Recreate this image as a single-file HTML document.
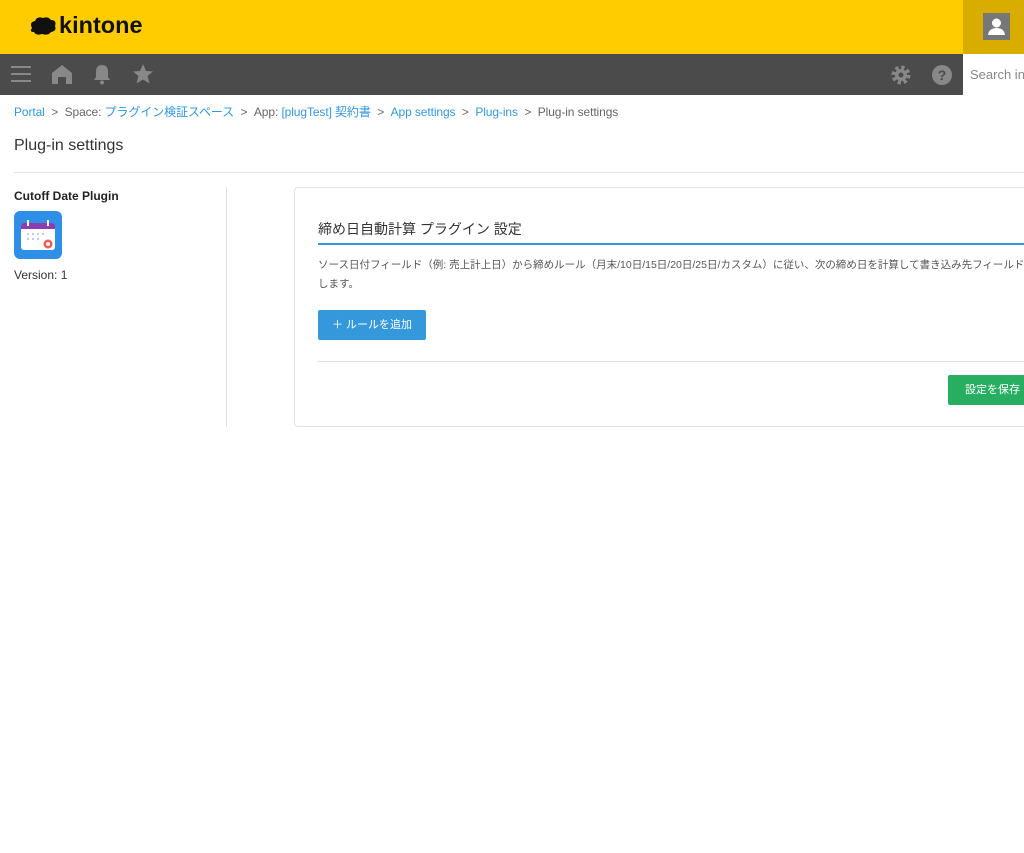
<!DOCTYPE html><html><head><meta charset="utf-8"><style>
body{margin:0;width:1024px;height:853px;overflow:hidden;background:#fff;font-family:"Liberation Sans","Noto Sans CJK JP",sans-serif;position:relative;color:#333}
.a{position:absolute}
.bc{font-size:12px;color:#666;white-space:nowrap;letter-spacing:-0.1px}
.bc a{color:#3498db;text-decoration:none}
</style></head><body>
<div class="a" style="left:0;top:0;width:1024px;height:54px;background:#fc0"></div>
<div class="a" style="left:963px;top:0;width:61px;height:54px;background:#d9ac00"></div>
<div class="a" style="left:983px;top:13px;width:27px;height:27px;background:#777"></div>
<svg class="a" style="left:983px;top:13px" width="27" height="27"><circle cx="13.5" cy="10" r="4.5" fill="#fff"/><path d="M5 22 Q6 15 13.5 15 Q21 15 22 22Z" fill="#fff"/></svg>
<svg class="a" style="left:29px;top:16px" width="30" height="22"><path d="M3 12 Q0 6 6 5 Q8 0 14 2 Q19 0 22 4 Q28 4 26 10 Q28 15 22 16 Q19 20 13 18 Q7 20 5 16 Q0 16 3 12Z" fill="#111"/></svg>
<div class="a" style="left:59px;top:12px;font-size:23.5px;font-weight:bold;color:#111">kintone</div>
<div class="a" style="left:0;top:54px;width:963px;height:41px;background:#4b4b4b"></div>
<div class="a" style="left:963px;top:54px;width:61px;height:41px;background:#fff"></div>
<div class="a" style="left:970px;top:67px;font-size:13px;color:#888;white-space:nowrap">Search in</div>
<svg class="a" style="left:10px;top:64px" width="22" height="20"><path d="M1 3H21M1 10H21M1 17H21" stroke="#888" stroke-width="2"/></svg>
<svg class="a" style="left:51px;top:64px" width="22" height="20"><path d="M11 1 L21 9 V20 H15 V13 H7 V20 H1 V9Z" fill="#888"/></svg>
<svg class="a" style="left:92px;top:63px" width="20" height="22"><path d="M10 2 Q4 2 4 9 V14 L2 17 H18 L16 14 V9 Q16 2 10 2Z" fill="#888"/><circle cx="10" cy="19.5" r="2" fill="#888"/></svg>
<svg class="a" style="left:132px;top:63px" width="22" height="22"><path d="M11 1 L14 8 L21 8.5 L15.5 13 L17.5 20.5 L11 16.5 L4.5 20.5 L6.5 13 L1 8.5 L8 8Z" fill="#888"/></svg>
<svg class="a" style="left:890px;top:64px" width="22" height="22"><circle cx="11" cy="11" r="7" fill="none" stroke="#888" stroke-width="5" stroke-dasharray="3 2.5"/><circle cx="11" cy="11" r="6" fill="#888"/><circle cx="11" cy="11" r="2.5" fill="#4b4b4b"/></svg>
<svg class="a" style="left:931px;top:64px" width="22" height="22"><circle cx="11" cy="11" r="10" fill="#888"/><text x="11" y="16" text-anchor="middle" font-size="14" font-weight="bold" fill="#4b4b4b" font-family="Liberation Sans">?</text></svg>
<div class="a bc" style="left:14px;top:103px"><a>Portal</a> &nbsp;&gt;&nbsp; Space: <a>プラグイン検証スペース</a> &nbsp;&gt;&nbsp; App: <a>[plugTest] 契約書</a> &nbsp;&gt;&nbsp; <a>App settings</a> &nbsp;&gt;&nbsp; <a>Plug-ins</a> &nbsp;&gt;&nbsp; Plug-in settings</div>
<div class="a" style="left:14px;top:137px;font-size:16px;color:#333">Plug-in settings</div>
<div class="a" style="left:14px;top:172px;width:1010px;height:1px;background:#e3e3e3"></div>
<div class="a" style="left:14px;top:189px;font-size:12px;font-weight:bold;color:#222">Cutoff Date Plugin</div>
<svg class="a" style="left:14px;top:211px" width="48" height="48"><rect width="48" height="48" rx="6" fill="#2d8fe6"/><rect x="7" y="12" width="34" height="27" rx="3" fill="#fff"/><path d="M7 15 Q7 12 10 12 H38 Q41 12 41 15 V18 H7Z" fill="#8e3cb0"/><path d="M14 9V15M34 9V15" stroke="#fff" stroke-width="2"/><g fill="#b0b8e8"><circle cx="14" cy="23" r="1"/><circle cx="19" cy="23" r="1"/><circle cx="24" cy="23" r="1"/><circle cx="29" cy="23" r="1"/><circle cx="14" cy="28" r="1"/><circle cx="19" cy="28" r="1"/><circle cx="24" cy="28" r="1"/></g><circle cx="34" cy="33" r="4.5" fill="#f55"/><circle cx="34" cy="33" r="2" fill="#fff"/></svg>
<div class="a" style="left:14px;top:268px;font-size:12px;color:#333">Version: 1</div>
<div class="a" style="left:226px;top:187px;width:1px;height:240px;background:#e3e3e3"></div>
<div class="a" style="left:294px;top:187px;width:740px;height:238px;border:1px solid #e3e3e3;border-radius:4px"></div>
<div class="a" style="left:318px;top:219px;font-size:14px;color:#333">締め日自動計算 プラグイン 設定</div>
<div class="a" style="left:318px;top:243px;width:706px;height:2px;background:#3498db"></div>
<div class="a" style="left:318px;top:256px;font-size:10.5px;color:#555;line-height:19px;white-space:nowrap">ソース日付フィールド（例: 売上計上日）から締めルール（月末/10日/15日/20日/25日/カスタム）に従い、次の締め日を計算して書き込み先フィールドに保存<br>します。</div>
<div class="a" style="left:318px;top:310px;width:108px;height:30px;background:#3498db;border-radius:2px;color:#fff;font-size:11px;line-height:30px;text-align:center">＋ ルールを追加</div>
<div class="a" style="left:318px;top:361px;width:706px;height:1px;background:#e3e3e3"></div>
<div class="a" style="left:948px;top:375px;width:80px;height:30px;background:#27ae60;border-radius:2px;color:#fff;font-size:11px;line-height:30px;padding-left:17px;box-sizing:border-box">設定を保存</div>
</body></html>
